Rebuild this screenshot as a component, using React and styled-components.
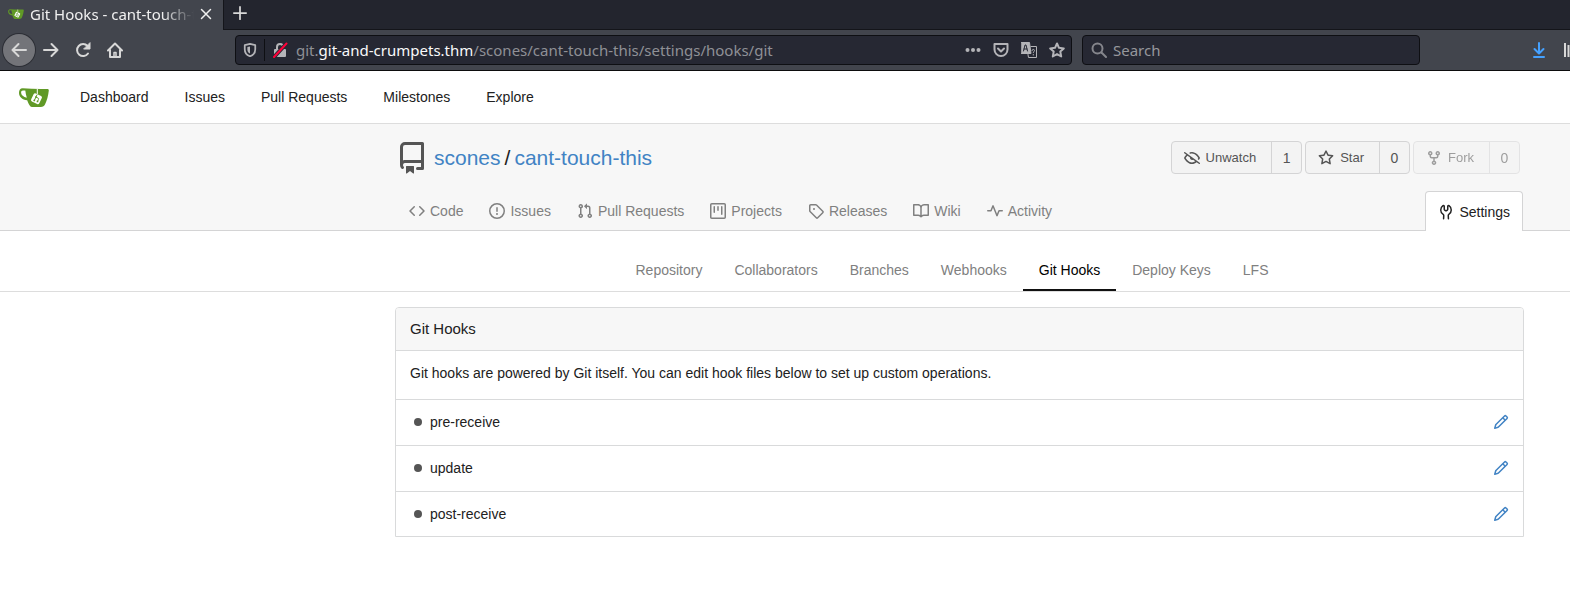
import React from 'react';
import styled, { createGlobalStyle, css } from 'styled-components';

const GlobalStyle = createGlobalStyle`
  *, *::before, *::after { box-sizing: border-box; }
  body {
    margin: 0;
    background: #fff;
    color: #212121;
    font: 14px/20px "Liberation Sans", Arial, sans-serif;
    overflow-x: hidden;
  }
  a { color: inherit; text-decoration: none; }
  button { font: inherit; color: inherit; border: 0; background: none; padding: 0; }
  svg { display: block; flex: none; }
`;

/* ---------- icons ---------- */

const octicons = {
  repo: 'M2 2.5A2.5 2.5 0 014.500 0h8.750a.75.75 0 01.75.75v12.500a.75.75 0 01-.75.75h-2.500a.75.75 0 110-1.500h1.750v-2h-8a1 1 0 00-.714 1.700.75.75 0 01-1.072 1.050A2.495 2.495 0 012 11.500v-9zm10.500-1V9h-8c-.356 0-.694.074-1 .208V2.500a1 1 0 011-1h8zM5 12.250v3.250a.25.25 0 00.4.2l1.450-1.087a.25.25 0 01.3 0L8.600 15.700a.25.25 0 00.4-.2v-3.250a.25.25 0 00-.25-.25h-3.500a.25.25 0 00-.25.25z',
  code: 'M4.720 3.220a.75.75 0 011.060 1.060L2.060 8l3.720 3.720a.75.75 0 11-1.060 1.060L.47 8.530a.75.75 0 010-1.060l4.250-4.250zm6.560 0a.75.75 0 10-1.060 1.060L13.940 8l-3.720 3.720a.75.75 0 101.060 1.060l4.250-4.250a.75.75 0 000-1.060l-4.250-4.250z',
  issue: 'M8 1.500a6.500 6.500 0 100 13 6.500 6.500 0 000-13zM0 8a8 8 0 1116 0A8 8 0 010 8zm9 3a1 1 0 11-2 0 1 1 0 012 0zm-.25-6.250a.75.75 0 00-1.500 0v3.500a.75.75 0 001.500 0v-3.500z',
  pull: 'M7.177 3.073L9.573.677A.25.25 0 0110 .854v4.792a.25.25 0 01-.427.177L7.177 3.427a.25.25 0 010-.354zM3.750 2.500a.75.75 0 100 1.500.75.75 0 000-1.500zm-2.250.75a2.250 2.250 0 113 2.122v5.256a2.251 2.251 0 11-1.500 0V5.372A2.250 2.250 0 011.500 3.250zM11 2.500h-1V4h1a1 1 0 011 1v5.628a2.251 2.251 0 101.500 0V5A2.500 2.500 0 0011 2.500zm1 10.250a.75.75 0 111.500 0 .75.75 0 01-1.500 0zM3.750 12a.75.75 0 100 1.500.75.75 0 000-1.500z',
  project: 'M1.750 0A1.750 1.750 0 000 1.750v12.500C0 15.216.784 16 1.750 16h12.500A1.750 1.750 0 0016 14.250V1.750A1.750 1.750 0 0014.250 0H1.750zM1.500 1.750a.25.25 0 01.25-.25h12.500a.25.25 0 01.25.25v12.500a.25.25 0 01-.25.25H1.750a.25.25 0 01-.25-.25V1.750zM11.750 3a.75.75 0 00-.75.75v7.500a.75.75 0 001.500 0v-7.500a.75.75 0 00-.75-.75zm-8.250.75a.75.75 0 011.500 0v5.500a.75.75 0 01-1.500 0v-5.500zM8 3a.75.75 0 00-.75.75v3.500a.75.75 0 001.500 0v-3.500A.75.75 0 008 3z',
  tag: 'M2.500 7.775V2.750a.25.25 0 01.25-.25h5.025a.25.25 0 01.177.073l6.250 6.250a.25.25 0 010 .354l-5.025 5.025a.25.25 0 01-.354 0l-6.250-6.250a.25.25 0 01-.073-.177zm-1.500 0V2.750C1 1.784 1.784 1 2.750 1h5.025c.464 0 .91.184 1.238.513l6.250 6.250a1.750 1.750 0 010 2.474l-5.026 5.026a1.750 1.750 0 01-2.474 0l-6.250-6.250A1.750 1.750 0 011 7.775zM6 5a1 1 0 100 2 1 1 0 000-2z',
  book: 'M0 1.750A.75.75 0 01.75 1h4.253c1.227 0 2.317.59 3 1.501A3.744 3.744 0 0111.006 1h4.245a.75.75 0 01.75.75v10.500a.75.75 0 01-.75.75h-4.507a2.250 2.250 0 00-1.591.659l-.622.621a.75.75 0 01-1.060 0l-.622-.621A2.250 2.250 0 005.258 13H.75a.75.75 0 01-.75-.75V1.750zm8.755 3a2.250 2.250 0 012.250-2.250H14.500v9h-3.757c-.71 0-1.400.201-1.992.572l.004-7.322zm-1.504 7.324l.004-5.073-.002-2.253A2.250 2.250 0 005.003 2.500H1.500v9h3.757a3.750 3.750 0 011.994.574z',
  pulse: 'M6 2a.75.75 0 01.696.471L10 10.731l1.304-3.260A.75.75 0 0112 7h3.250a.75.75 0 010 1.500h-2.742l-1.812 4.528a.75.75 0 01-1.392 0L6 4.770 4.696 8.030A.75.75 0 014 8.500H.75a.75.75 0 010-1.500h2.742l1.812-4.529A.75.75 0 016 2z',
  tools: 'M5.433 2.304A4.494 4.494 0 003.500 6c0 1.598.832 3.002 2.090 3.802.518.328.929.923.902 1.640v.008l-.164 3.337a.75.75 0 11-1.498-.073l.163-3.330c.002-.085-.05-.216-.207-.316A5.996 5.996 0 012 6a5.994 5.994 0 012.567-4.920 1.482 1.482 0 011.673-.040c.462.296.76.827.760 1.423v2.820c0 .082.041.160.110.206l.750.510a.25.25 0 00.280 0l.750-.510A.25.25 0 009 5.282V2.463c0-.596.298-1.127.760-1.423a1.482 1.482 0 011.673.040A5.994 5.994 0 0114 6a5.996 5.996 0 01-2.786 5.068c-.157.100-.209.230-.207.315l.163 3.330a.75.75 0 11-1.498.074l-.164-3.345c-.027-.717.384-1.312.902-1.640A4.496 4.496 0 0012.500 6a4.494 4.494 0 00-1.933-3.696c-.024.017-.067.067-.067.160v2.818a1.750 1.750 0 01-.767 1.448l-.750.510a1.750 1.750 0 01-1.966 0l-.750-.510A1.750 1.750 0 015.500 5.282V2.463c0-.092-.043-.142-.067-.159z',
  eyeClosed: 'M.143 2.310a.75.75 0 011.047-.167l14.500 10.500a.75.75 0 11-.88 1.214l-2.248-1.628C11.346 13.190 9.792 14 8 14c-1.981 0-3.670-.992-4.933-2.078C1.797 10.832.88 9.577.43 8.900a1.618 1.618 0 010-1.797c.353-.533.995-1.420 1.868-2.305L.31 3.357A.75.75 0 01.143 2.310zm3.386 3.378a14.210 14.210 0 00-1.850 2.244.12.12 0 00-.022.068c0 .021.006.045.022.068.412.621 1.242 1.750 2.366 2.717C5.175 11.758 6.527 12.500 8 12.500c1.195 0 2.310-.488 3.290-1.191L9.063 9.695A2 2 0 016.058 7.520L3.529 5.688zM8 3.500c-.516 0-1.017.090-1.499.251a.75.75 0 11-.473-1.423A6.230 6.230 0 018 2c1.981 0 3.670.992 4.933 2.078 1.270 1.091 2.187 2.345 2.637 3.023a1.620 1.620 0 010 1.798c-.110.166-.248.365-.410.587a.75.75 0 11-1.210-.887c.148-.201.272-.382.371-.530a.119.119 0 000-.137c-.412-.621-1.242-1.750-2.366-2.717C10.825 4.242 9.473 3.500 8 3.500z',
  star: 'M8 .25a.75.75 0 01.673.418l1.882 3.815 4.210.612a.75.75 0 01.416 1.279l-3.046 2.970.719 4.192a.75.75 0 01-1.088.791L8 12.347l-3.766 1.980a.75.75 0 01-1.088-.790l.72-4.194L.818 6.374a.75.75 0 01.416-1.280l4.210-.611L7.327.668A.75.75 0 018 .25zm0 2.445L6.615 5.500a.75.75 0 01-.564.410l-3.097.450 2.240 2.184a.75.75 0 01.216.664l-.528 3.084 2.769-1.456a.75.75 0 01.698 0l2.770 1.456-.530-3.084a.75.75 0 01.216-.664l2.240-2.183-3.096-.450a.75.75 0 01-.564-.410L8 2.694v.001z',
  fork: 'M5 3.250a.75.75 0 11-1.500 0 .75.75 0 011.500 0zm0 2.122a2.250 2.250 0 10-1.500 0v.878A2.250 2.250 0 005.750 8.500h1.500v2.128a2.251 2.251 0 101.500 0V8.500h1.500a2.250 2.250 0 002.250-2.250v-.878a2.250 2.250 0 10-1.500 0v.878a.75.75 0 01-.75.75h-4.500A.75.75 0 015 6.250v-.878zm3.750 7.378a.75.75 0 11-1.500 0 .75.75 0 011.500 0zm3-8.750a.75.75 0 100-1.500.75.75 0 000 1.500z',
  pencil: 'M11.013 1.427a1.750 1.750 0 012.474 0l1.086 1.086a1.750 1.750 0 010 2.474l-8.610 8.610c-.21.21-.47.364-.756.445l-3.251.930a.75.75 0 01-.927-.928l.929-3.250a1.750 1.750 0 01.445-.758l8.610-8.610zm1.414 1.060a.25.25 0 00-.354 0L10.811 3.750l1.439 1.440 1.263-1.263a.25.25 0 000-.354l-1.086-1.086zM11.189 6.250L9.750 4.810l-6.286 6.287a.25.25 0 00-.064.108l-.558 1.953 1.953-.558a.249.249 0 00.108-.064l6.286-6.286z',
};

const Octicon = ({ name, size = 16 }) => (
  <svg width={size} height={size} viewBox="0 0 16 16" fill="currentColor" fillRule="evenodd" aria-hidden="true">
    <path d={octicons[name]} />
  </svg>
);

const GiteaLogo = ({ width = 30, height = 19 }) => (
  <svg width={width} height={height} viewBox="0 0 30 19" aria-hidden="true">
    <path
      fill="#609926"
      fillRule="evenodd"
      d="M3.600 0.300C1.300 .3 0 2.100 0 4.800c0 4.100 3 7 8.200 7.500.8 2.400 2 5 3.300 6.100.8.600 1.800.600 3 .600h7.300c2.300 0 3.300-.8 4.300-2.700 1.800-3.600 3.200-8.400 3.700-13.700.1-1.200-.4-1.700-1.500-1.700C20 1.200 12 .9 3.600.3zM4 2.500h2.300c.3 2.500.8 5.100 1.500 7.200C4.400 9 2.200 7.200 2.100 4.800 2.100 3.400 2.700 2.500 4 2.500z"
    />
    <path d="M18.300 1v5" stroke="#fff" strokeWidth="1" />
    <rect x="13" y="6.200" width="9" height="9" rx="1.600" fill="#fff" transform="rotate(26 17.500 10.700)" />
    <g stroke="#609926" strokeWidth="1" fill="none" strokeLinecap="round">
      <path d="M17.900 7l-2.600 5.500M17 9.100l2.100 1c.8.400.5 1.100.2 1.700l-.7 1.600" />
    </g>
    <g fill="#609926">
      <circle cx="17" cy="9.100" r=".8" />
      <circle cx="15.300" cy="12.400" r=".9" />
      <circle cx="18.500" cy="13.400" r=".9" />
    </g>
  </svg>
);

const Line = ({ size = 16, width = 2, children, ...rest }) => (
  <svg
    width={size}
    height={size}
    viewBox="0 0 16 16"
    fill="none"
    stroke="currentColor"
    strokeWidth={width}
    strokeLinecap="round"
    strokeLinejoin="round"
    aria-hidden="true"
    {...rest}
  >
    {children}
  </svg>
);

const BackIcon = () => <Line><path d="M15 8H1.500M7.500 2l-6 6 6 6" /></Line>;
const ForwardIcon = () => <Line><path d="M1 8h13.500M8.500 2l6 6-6 6" /></Line>;
const ReloadIcon = () => (
  <Line><path d="M13 11.500A6 6 0 1 1 12.500 4" /><path d="M15 1v6H9z" fill="currentColor" strokeWidth="1" /></Line>
);
const HomeIcon = () => (
  <Line><path d="M1 8.500L8 1.500l7 7M3 8v7h10V8" /><path d="M7 14.500v-4h2v4" strokeWidth="1.500" /></Line>
);
const CloseIcon = () => <Line size={12}><path d="M2 2l12 12M14 2L2 14" /></Line>;
const PlusIcon = () => <Line size={14}><path d="M8 1v14M1 8h14" /></Line>;
const ShieldIcon = () => (
  <Line size={14}>
    <path d="M8 1L14 2.500V7c0 4.500-2.500 7-6 8.200C4.500 14 2 11.500 2 7V2.500z" />
    <path d="M8 4v8C6 11 5 9.500 5 7V4.700z" fill="currentColor" stroke="none" />
  </Line>
);
const InsecureIcon = () => (
  <Line>
    <path d="M5 7V5a3 3 0 0 1 6 0v2" />
    <rect x="2" y="7" width="12" height="8" rx="1" fill="currentColor" stroke="none" />
    <path d="M2 15L14 2" stroke="#262833" strokeWidth="4" />
    <path d="M2 15L14.500 1.500" stroke="#ff0039" />
  </Line>
);
const DotsIcon = () => (
  <Line stroke="none" fill="currentColor">
    <circle cx="2.500" cy="8" r="2" /><circle cx="8" cy="8" r="2" /><circle cx="13.500" cy="8" r="2" />
  </Line>
);
const PocketIcon = () => (
  <Line><path d="M1.500 2h13v5.500a6.500 6.500 0 0 1-13 0z" /><path d="M5 6.500l3 3 3-3" /></Line>
);
const TranslateIcon = () => (
  <Line width={1}>
    <path d="M.5 .5h8l1.500 11H.5z" fill="currentColor" />
    <path d="M2.500 9L4 3h1l1.500 6M3 7h3" stroke="#262833" />
    <path d="M10 4.500h5.500v11h-8l-.5-3" />
    <path d="M11 8.500c0-1.500 2.500-1.500 2.500 0 0 1-1.200 1-1.200 2.200M12.300 12.500v.5" />
  </Line>
);
const StarIcon = () => (
  <Line><path d="M8 1.500l2 4.300 4.800.6-3.500 3.200.9 4.900L8 12.100l-4.200 2.400.9-4.900L1.200 6.400 6 5.800z" /></Line>
);
const SearchIcon = () => <Line><circle cx="6.500" cy="6.500" r="5" /><path d="M10.500 10.500l4.500 4.500" /></Line>;
const DownloadIcon = () => <Line><path d="M8 1v10M3.500 7l4.500 4.500L12.500 7M3 15h10" /></Line>;
const LibraryIcon = () => <Line><path d="M3 1v14M6.500 3v12M10 1v14M12 3l3 12" strokeLinecap="butt" /></Line>;

/* ---------- browser window ---------- */

const Browser = styled.div`
  background: #42454d;
  color: #d8d8d8;
  border-bottom: 1px solid #0c0c0d;
  font: 15px/20px "Noto Sans", sans-serif;
`;

const TabStrip = styled.div`
  display: flex;
  height: 30px;
  background: #23252e;
`;

const BrowserTab = styled.div`
  display: flex;
  align-items: center;
  width: 223px;
  padding: 0 11px 2px 8px;
  gap: 6px;
  background: #42454d;
  color: #f0f0f0;
`;

const TabTitle = styled.span`
  flex: 1;
  overflow: hidden;
  white-space: nowrap;
  mask-image: linear-gradient(to right, #000 calc(100% - 32px), transparent);
`;

const NewTab = styled.button`
  flex: 1;
  display: flex;
  align-items: center;
  padding: 0 9px 3px;
  border-left: 1px solid #14151a;
  border-bottom: 1px solid #14151a;
`;

const Toolbar = styled.div`
  display: flex;
  align-items: center;
  height: 40px;
  padding-left: 3px;
`;

const NavButton = styled.button`
  display: grid;
  place-items: center;
  width: 32px;
  height: 32px;
  ${(p) => p.$round && css`
    border-radius: 50%;
    background: #737479;
    box-shadow: 0 0 0 1px #2c2e35;
  `}
`;

const Field = styled.label`
  display: flex;
  align-items: center;
  height: 30px;
  border: 1px solid #0e0f13;
  border-radius: 4px;
  background: #262833;
  color: #b4b4b8;
`;

const AddressField = styled(Field)`
  flex: 0 1 837px;
  margin-left: 104px;
  padding: 0 6px 0 7px;
  gap: 12px;
`;

const SearchField = styled(Field)`
  flex: 0 1 338px;
  margin-left: 10px;
  padding: 0 8px;
  gap: 6px;
  color: #85868c;
`;

const SearchInput = styled.input`
  flex: 1;
  min-width: 0;
  border: 0;
  padding: 0;
  outline: 0;
  background: none;
  color: inherit;
  font: inherit;
  &::placeholder { color: #96979c; opacity: 1; }
`;

const SiteInfo = styled.span`
  display: flex;
  align-items: center;
  gap: 7px;
  color: #b4b4b8;
`;

const Divider = styled.span`
  width: 1px;
  height: 22px;
  background: #0e0f13;
`;

const Url = styled.span`
  flex: 1;
  min-width: 0;
  overflow: hidden;
  white-space: nowrap;
  margin-left: -4px;
  color: #8f9096;
  strong { font-weight: 400; color: #f9f9fa; }
`;

const ToolbarEnd = styled.div`
  display: flex;
  flex: none;
  gap: 15px;
  margin-left: auto;
  margin-right: -8px;
`;

const ToolButton = styled.button`
  color: ${(p) => (p.$active ? '#45a1ff' : 'inherit')};
`;

/* ---------- site ---------- */

const Navbar = styled.nav`
  display: flex;
  align-items: center;
  height: 53px;
  padding: 0 19px;
  border-bottom: 1px solid #dddddd;
`;

const NavLinks = styled.div`
  display: flex;
  gap: 36px;
  padding-left: 31px;
`;

const Container = styled.div`
  max-width: 1129px;
  margin: 0 46px 0 auto;
`;

const RepoHeader = styled.header`
  background: #f7f7f7;
  border-bottom: 1px solid #d4d4d5;
  padding-top: 17px;
`;

const TitleRow = styled.div`
  display: flex;
  align-items: center;
  justify-content: space-between;
  height: 33px;
  padding: 0 4px 0 1px;
`;

const RepoTitle = styled.h1`
  display: flex;
  align-items: center;
  gap: 6px;
  margin: 0;
  color: #555;
  font-size: 21px;
  line-height: 26px;
  font-weight: 400;
`;

const TitlePath = styled.span`
  display: flex;
  gap: 4px;
  color: #212121;
  a { color: #4183c4; }
`;

const Actions = styled.div`
  display: flex;
  gap: 3px;
`;

const ActionGroup = styled.div`
  display: flex;
  height: 33px;
  border: 1px solid #d4d4d5;
  border-radius: 4px;
  background: #f3f3f3;
  color: #555;
  opacity: ${(p) => (p.$disabled ? 0.55 : 1)};
`;

const ActionButton = styled.button`
  display: flex;
  align-items: center;
  gap: 6px;
  padding: 0 15px 0 12px;
  font-size: 13px;
`;

const ActionCount = styled.a`
  display: grid;
  place-items: center;
  width: 30px;
  border-left: 1px solid #d4d4d5;
`;

const RepoTabs = styled.nav`
  display: flex;
  height: 39px;
  margin-top: 17px;
  padding: 0 1px;
`;

const RepoTab = styled.a`
  display: flex;
  align-items: center;
  gap: 5px;
  padding: 1px 13px 0;
  color: #808080;
  ${(p) => p.$active && css`
    height: 40px;
    margin-left: auto;
    padding: 1px 12px 0;
    border: 1px solid #d4d4d5;
    border-bottom: 0;
    border-radius: 4px 4px 0 0;
    background: #fff;
    color: #212121;
  `}
`;

const SubNav = styled.nav`
  display: flex;
  justify-content: center;
  height: 61px;
  padding: 19px 0 0 334px;
  border-bottom: 1px solid #dddddd;
`;

const SubNavLink = styled.a`
  display: flex;
  align-items: center;
  padding: 0 16px;
  border-bottom: 2px solid ${(p) => (p.$active ? '#111' : 'transparent')};
  color: ${(p) => (p.$active ? '#000' : '#808080')};
  white-space: nowrap;
`;

const Panel = styled.section`
  margin-top: 15px;
  border: 1px solid #d9dadb;
  border-radius: 4px 4px 0 0;
`;

const PanelHeader = styled.h2`
  margin: 0;
  padding: 11px 14px;
  border-radius: 3px 3px 0 0;
  background: #f7f7f7;
  font-size: 15px;
  line-height: 20px;
  font-weight: 400;
`;

const PanelText = styled.p`
  margin: 0;
  height: 49px;
  padding: 12px 14px;
  border-top: 1px solid #d9dadb;
`;

const HookList = styled.ul`
  list-style: none;
  margin: 0;
  padding: 0;
`;

const HookRow = styled.li`
  display: flex;
  align-items: center;
  height: 46px;
  padding: 0 14px 1px 18px;
  gap: 8px;
  border-top: 1px solid #d9dadb;
  &:last-child { height: 45px; padding-bottom: 0; }
`;

const StatusDot = styled.span`
  width: 8px;
  height: 8px;
  border-radius: 50%;
  background: #555;
`;

const EditLink = styled.a`
  margin-left: auto;
  color: #4183c4;
`;

const repoTabs = [
  ['code', 'Code'],
  ['issue', 'Issues'],
  ['pull', 'Pull Requests'],
  ['project', 'Projects'],
  ['tag', 'Releases'],
  ['book', 'Wiki'],
  ['pulse', 'Activity'],
];

const actions = [
  { icon: 'eyeClosed', label: 'Unwatch', count: 1 },
  { icon: 'star', label: 'Star', count: 0 },
  { icon: 'fork', label: 'Fork', count: 0, disabled: true },
];

export default function App() {
  return (
    <>
      <GlobalStyle />
      <Browser>
        <TabStrip>
          <BrowserTab>
            <GiteaLogo width={16} height={10} />
            <TabTitle>Git Hooks - cant-touch-this</TabTitle>
            <button aria-label="Close tab"><CloseIcon /></button>
          </BrowserTab>
          <NewTab aria-label="New tab"><PlusIcon /></NewTab>
        </TabStrip>
        <Toolbar>
          <NavButton $round aria-label="Back"><BackIcon /></NavButton>
          <NavButton aria-label="Forward"><ForwardIcon /></NavButton>
          <NavButton aria-label="Reload"><ReloadIcon /></NavButton>
          <NavButton aria-label="Home"><HomeIcon /></NavButton>
          <AddressField as="div">
            <SiteInfo><ShieldIcon /><Divider /><InsecureIcon /></SiteInfo>
            <Url>git.<strong>git-and-crumpets.thm</strong>/scones/cant-touch-this/settings/hooks/git</Url>
            <button aria-label="Page actions"><DotsIcon /></button>
            <button aria-label="Save to Pocket"><PocketIcon /></button>
            <button aria-label="Translate"><TranslateIcon /></button>
            <button aria-label="Bookmark"><StarIcon /></button>
          </AddressField>
          <SearchField>
            <SearchIcon />
            <SearchInput placeholder="Search" aria-label="Search" />
          </SearchField>
          <ToolbarEnd>
            <ToolButton $active aria-label="Downloads"><DownloadIcon /></ToolButton>
            <ToolButton aria-label="Library"><LibraryIcon /></ToolButton>
          </ToolbarEnd>
        </Toolbar>
      </Browser>

      <Navbar>
        <a href="#home" aria-label="Home"><GiteaLogo /></a>
        <NavLinks>
          {['Dashboard', 'Issues', 'Pull Requests', 'Milestones', 'Explore'].map((t) => (
            <a key={t} href="#nav">{t}</a>
          ))}
        </NavLinks>
      </Navbar>

      <RepoHeader>
        <Container>
          <TitleRow>
            <RepoTitle>
              <Octicon name="repo" size={32} />
              <TitlePath><a href="#scones">scones</a>/<a href="#repo">cant-touch-this</a></TitlePath>
            </RepoTitle>
            <Actions>
              {actions.map((a) => (
                <ActionGroup key={a.label} $disabled={a.disabled}>
                  <ActionButton disabled={a.disabled}><Octicon name={a.icon} />{a.label}</ActionButton>
                  <ActionCount href="#count">{a.count}</ActionCount>
                </ActionGroup>
              ))}
            </Actions>
          </TitleRow>
          <RepoTabs>
            {repoTabs.map(([icon, label]) => (
              <RepoTab key={label} href="#tab"><Octicon name={icon} />{label}</RepoTab>
            ))}
            <RepoTab href="#settings" $active><Octicon name="tools" />Settings</RepoTab>
          </RepoTabs>
        </Container>
      </RepoHeader>

      <SubNav>
        {['Repository', 'Collaborators', 'Branches', 'Webhooks', 'Git Hooks', 'Deploy Keys', 'LFS'].map((t) => (
          <SubNavLink key={t} href="#sub" $active={t === 'Git Hooks'}>{t}</SubNavLink>
        ))}
      </SubNav>

      <Container>
        <Panel>
          <PanelHeader>Git Hooks</PanelHeader>
          <PanelText>Git hooks are powered by Git itself. You can edit hook files below to set up custom operations.</PanelText>
          <HookList>
            {['pre-receive', 'update', 'post-receive'].map((h) => (
              <HookRow key={h}>
                <StatusDot />
                <span>{h}</span>
                <EditLink href="#edit" aria-label={`Edit ${h}`}><Octicon name="pencil" /></EditLink>
              </HookRow>
            ))}
          </HookList>
        </Panel>
      </Container>
    </>
  );
}
